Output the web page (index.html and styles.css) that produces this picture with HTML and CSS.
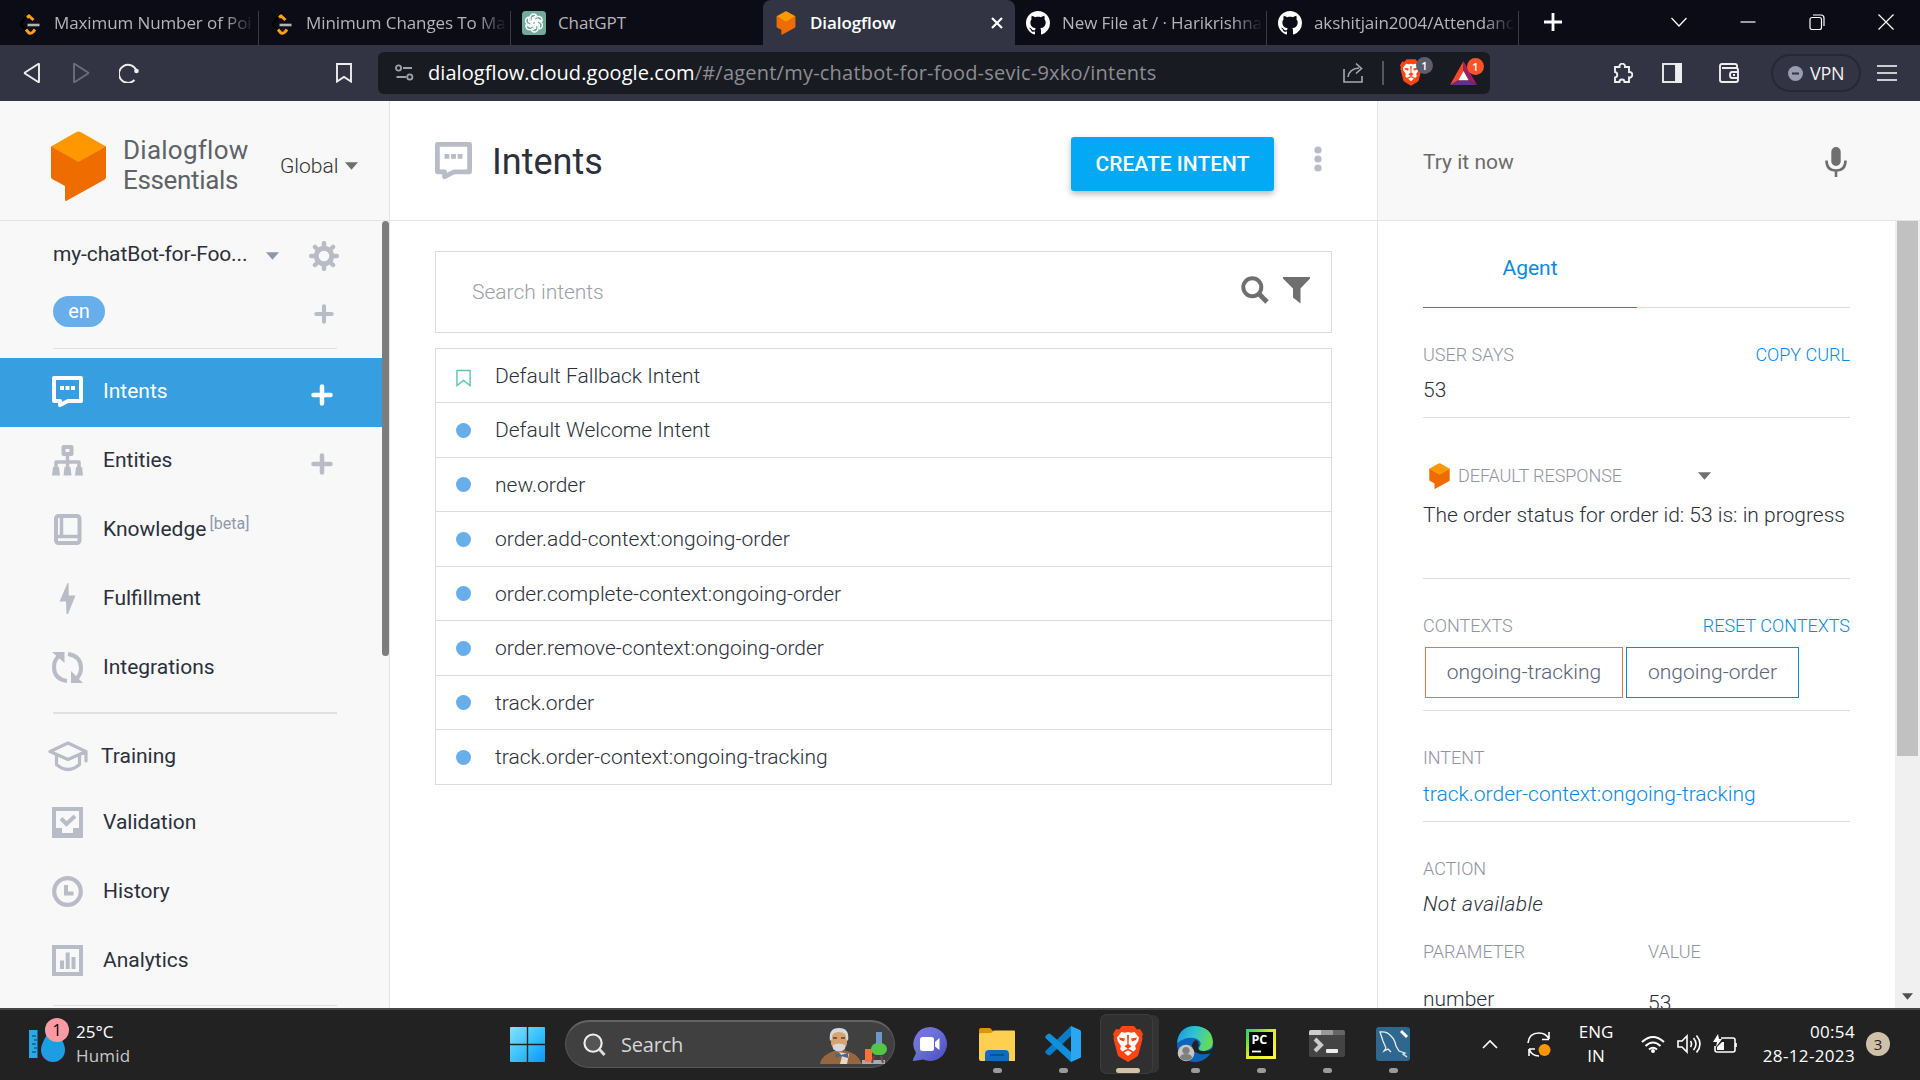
FILE: index.html
```html
<!DOCTYPE html>
<html lang="en">
<head>
<meta charset="utf-8">
<title>Dialogflow</title>
<link rel="stylesheet" href="styles.css">
</head>
<body>
<svg class="defs" aria-hidden="true">
  <symbol id="df" viewBox="0 0 55 70"><path fill="#ef6c00" d="M0 15 27.500 30 55 15V46q0 2-2 3L16 69.500Q14 71 14 68V55L2 48.500Q0 47.500 0 46Z"/><path fill="#ff9800" d="M0 15.500 25 1.200q2.500-1.500 5 0L55 15.500 27.500 31Z"/></symbol>
  <symbol id="leet" viewBox="0 0 24 24"><path d="M12 2 4 11q-1.500 2 0 4l6 6" fill="none" stroke="#000" stroke-width="2.600"/><path d="m9 6.500 2-1.500 4.500 4M8 18.500l3 3.500q2 1 4-1l2-2.500" fill="none" stroke="#ffa116" stroke-width="3" /><path d="M9.500 14h12" stroke="#b3b3b3" stroke-width="2.600"/></symbol>
  <symbol id="gh" viewBox="0 0 16 16"><path fill="#fff" d="M8 0C3.580 0 0 3.580 0 8c0 3.540 2.290 6.530 5.470 7.590.4.070.55-.17.55-.38 0-.19-.01-.82-.01-1.490-2.010.37-2.530-.49-2.690-.94-.09-.23-.48-.94-.82-1.130-.28-.15-.68-.52-.01-.53.63-.01 1.080.58 1.230.82.72 1.210 1.870.87 2.330.66.07-.52.28-.87.51-1.070-1.780-.2-3.640-.89-3.640-3.950 0-.87.31-1.590.82-2.150-.08-.2-.36-1.020.08-2.120 0 0 .67-.21 2.200.82.640-.18 1.320-.27 2-.27s1.360.09 2 .27c1.530-1.040 2.200-.82 2.200-.82.44 1.100.16 1.920.08 2.120.51.56.82 1.270.82 2.150 0 3.070-1.870 3.750-3.650 3.950.29.25.54.73.54 1.480 0 1.070-.01 1.930-.01 2.200 0 .21.15.46.55.38A8.010 8.010 0 0 0 16 8c0-4.420-3.580-8-8-8Z"/></symbol>
  <symbol id="lion" viewBox="0 0 30 36"><path fill="#ff4612" d="m9 0h12l3 3.500 3-.5 3 5-1 3 .500 2-4 15.500q-.5 1.500-2 2.500L15 36l-8.500-5q-1.500-1-2-2.500L.500 13l.500-2-1-3 3-5 3 .500Z"/><path fill="#fff" d="m8.500 6 3.500.7 3-.7 3 .7 3.500-.7 4.500 5.500-.6 3.500-3.400 5 1 3-2.500 2.500-3.500-2-2-.7-2 .7-3.500 2L7 23l1-3-3.400-5-.6-3.500Z"/><path fill="#fff" d="m15 24.500 4 2-4 3.500-4-3.500Z"/><path fill="#ff4612" d="m6 11.500 6 1-1 3-4-1.500ZM24 11.500l-6 1 1 3 4-1.500ZM14 9h2l-.4 9 2.900 2.300L15 23l-3.500-2.700L14.400 18Z"/></symbol>
  <symbol id="chat" viewBox="0 0 31 31"><path fill="none" stroke="currentColor" stroke-width="4" stroke-linejoin="round" d="M2 2H29V25H16L8 29V25H2Z"/><path fill="currentColor" d="M8 10h4v4H8zM13.500 10h4v4h-4zM19 10h4v4h-4z"/></symbol>
  <symbol id="plus" viewBox="0 0 22 22"><path stroke="currentColor" stroke-width="4.500" stroke-linecap="round" d="M11 2.500v17M2.500 11h17"/></symbol>
  <symbol id="caret" viewBox="0 0 14 8"><path fill="currentColor" d="M0 0h14L7 8Z"/></symbol>
</svg>

<header class="browser">
  <div class="tabstrip">
    <div class="tab"><svg class="fav"><use href="#leet"/></svg><span class="tab-title fade">Maximum Number of Poi</span></div>
    <div class="tab"><svg class="fav"><use href="#leet"/></svg><span class="tab-title fade">Minimum Changes To Ma</span></div>
    <div class="tab last"><svg class="fav" viewBox="0 0 24 24"><rect width="24" height="24" rx="3.500" fill="#74aa9c"/><g fill="none" stroke="#fff" stroke-width="1.300"><path id="petal" d="M12 8.500 8 10.800V6.500a3.600 3.600 0 0 1 6.500-2l-4 2.300v8"/><use href="#petal" transform="rotate(60 12 12)"/><use href="#petal" transform="rotate(120 12 12)"/><use href="#petal" transform="rotate(180 12 12)"/><use href="#petal" transform="rotate(240 12 12)"/><use href="#petal" transform="rotate(300 12 12)"/></g></svg><span class="tab-title">ChatGPT</span></div>
    <div class="tab active"><svg class="fav"><use href="#df"/></svg><span class="tab-title">Dialogflow</span><svg class="tab-x" viewBox="0 0 12 12"><path d="m1 1 10 10M11 1 1 11" stroke="#fff" stroke-width="2.200"/></svg></div>
    <div class="tab"><svg class="fav"><use href="#gh"/></svg><span class="tab-title fade">New File at / · Harikrishna</span></div>
    <div class="tab"><svg class="fav"><use href="#gh"/></svg><span class="tab-title fade">akshitjain2004/Attendanc</span></div>
    <svg class="newtab" viewBox="0 0 18 18"><path d="M9 0v18M0 9h18" stroke="#fff" stroke-width="2.800"/></svg>
    <div class="winctl">
      <svg viewBox="0 0 16 16"><path d="m.500 4 7.500 8 7.500-8"/></svg>
      <svg viewBox="0 0 16 16"><path d="M.5 8h15"/></svg>
      <svg viewBox="0 0 16 16"><rect x="1" y="3.500" width="11.500" height="12" rx="2"/><path d="M4 1h8q3 0 3 3v8"/></svg>
      <svg viewBox="0 0 16 16"><path d="m.500.500 15 15M15.500.500l-15 15"/></svg>
    </div>
  </div>
  <div class="toolbar">
    <div class="nav">
      <svg viewBox="0 0 20 20"><path d="M16 1.200v17.600q0 .7-.8.2L2 10.500q-.6-.5 0-1L15.200 1q.8-.4.800.2Z"/></svg>
      <svg class="dim" viewBox="0 0 20 20"><path d="M3 1.200v17.600q0 .7.800.2L17 10.500q.6-.5 0-1L3.800 1Q3 .600 3 1.200Z"/></svg>
      <svg viewBox="0 0 20 20"><path d="M15.500 17a9 9 0 1 1 2-9"/><circle cx="17.500" cy="8" r="2.300" fill="#eee" stroke="none"/></svg>
    </div>
    <svg class="bookmark" viewBox="0 0 16 20"><path d="M1 1h14v17.500L8 14l-7 4.500Z"/></svg>
    <div class="url">
      <svg class="site" viewBox="0 0 19 17"><g fill="none" stroke="#a0a2aa" stroke-width="1.800"><circle cx="3.500" cy="4" r="2.600"/><path d="M8 4h9M1.500 13H11"/><circle cx="14.800" cy="13" r="2.600"/></g></svg>
      <span class="host">dialogflow.cloud.google.com</span><span class="path">/#/agent/my-chatbot-for-food-sevic-9xko/intents</span>
      <svg class="share" viewBox="0 0 22 22"><path d="M1 7v13h18v-6M5 15q1-8 11-9M13 1.500 18.500 6.500 13 11.500" fill="none" stroke="#a9abb3" stroke-width="1.600"/></svg>
      <i class="vsep"></i>
      <span class="shield"><svg><use href="#lion"/></svg><b>1</b></span>
      <span class="bat"><svg viewBox="0 0 26 23"><path fill="#ff4724" d="M13 0 0 23l8-4.500 5-9Z"/><path fill="#9e1f63" d="m13 0 13 23-8-4.500-5-9Z"/><path fill="#662d91" d="M0 23h26l-8-4.500H8Z"/><path fill="#fff" d="m13 9.500 5 9H8Z"/></svg><b>1</b></span>
    </div>
    <div class="ext">
      <svg viewBox="0 0 20 20"><path d="M2 4h4.500a2.800 2.800 0 1 1 5.500 0H16v5a2.800 2.800 0 1 1 0 5.500V19h-4.500a2.400 2.400 0 0 0-5 0H2v-4.500a2.800 2.800 0 0 0 0-5.500Z"/></svg>
      <svg viewBox="0 0 20 20"><rect x="1" y="1" width="18" height="18"/><path d="M14 1h5v18h-5z" fill="#eee"/></svg>
      <svg viewBox="0 0 20 20"><path d="M18 5V3q0-2-2-2H3Q1 1 1 3v14q0 2 2 2h14q2 0 2-2V7q0-2-2-2H3M19 9h-6q-2 0-2 3t2 3h6M14 12h2"/></svg>
    </div>
    <div class="vpn"><svg viewBox="0 0 15 15"><circle cx="7.500" cy="7.500" r="7.500" fill="#9a9cb0"/><path d="M4 7.500h7" stroke="#323443" stroke-width="2"/></svg>VPN</div>
    <svg class="burger" viewBox="0 0 20 16"><path d="M0 1h20M0 8h20M0 15h20" stroke="#fff" stroke-width="1.600"/></svg>
  </div>
</header>

<div class="page">
  <aside class="side">
    <div class="brand">
      <svg class="logo"><use href="#df"/></svg>
      <div class="brand-name"><span>Dialogflow</span><span class="sub">Essentials</span></div>
      <div class="region">Global</div><svg class="caret gray"><use href="#caret"/></svg>
    </div>
    <div class="side-body">
      <nav class="menu">
        <div class="agent"><span class="agent-name">my-chatBot-for-Foo...</span><svg class="caret"><use href="#caret"/></svg>
          <svg class="gear" viewBox="0 0 30 30"><g fill="none" stroke="currentColor"><circle cx="15" cy="15" r="7.800" stroke-width="5"/><path stroke-width="4.500" stroke-linecap="round" d="M15 2.200v3M15 24.800v3M2.200 15h3M24.800 15h3M6 6l2 2M22 22l2 2M6 24l2-2M22 8l2-2"/></g></svg></div>
        <div class="lang"><span class="pill">en</span><svg class="plus sm"><use href="#plus"/></svg></div>
        <hr>
        <a class="item on"><svg class="mi"><use href="#chat"/></svg><span>Intents</span><svg class="plus"><use href="#plus"/></svg></a>
        <a class="item"><svg class="mi" viewBox="0 0 31 31"><g fill="none" stroke="currentColor" stroke-width="4" stroke-linejoin="round"><rect x="11.500" y="2" width="8" height="7"/><path stroke-width="3.500" d="M15.500 10v14M4 24v-7h23v7"/></g><path fill="currentColor" d="M1 22h6l1 8.500H0ZM12.500 22h6l1 8.500h-8ZM24 22h6l1 8.500h-8Z"/></svg><span>Entities</span><svg class="plus"><use href="#plus"/></svg></a>
        <a class="item"><svg class="mi" viewBox="0 0 31 31"><rect x="4" y="2" width="23.500" height="27" rx="2.500" fill="none" stroke="currentColor" stroke-width="4"/><path fill="none" stroke="currentColor" stroke-width="3.500" d="M9.500 2v20M4 22.500h23"/></svg><span>Knowledge <sup>[beta]</sup></span></a>
        <a class="item"><svg class="mi" viewBox="0 0 31 31"><path fill="currentColor" d="M15.500 0 7.500 18.500H14L14.500 31h1.500L23.500 12.500H16.800L16.500 0Z"/></svg><span>Fulfillment</span></a>
        <a class="item"><svg class="mi" viewBox="0 0 31 31"><g fill="none" stroke="currentColor" stroke-width="4"><path d="M15 29Q2 27 2 15 2 8 7 4M16 2q13 2 13 14 0 7-5 11"/></g><path fill="currentColor" d="M0 0h12.500v11ZM31 31H19V19Z"/></svg><span>Integrations</span></a>
        <hr class="thick">
        <a class="item first"><svg class="mi wide" viewBox="0 0 40 31"><g fill="none" stroke="currentColor" stroke-width="3.200" stroke-linejoin="round" stroke-linecap="round"><path d="M2 10.500 20 2l18 8.500L20 18.500ZM8.500 14v9.500q11.500 10 23 0V14M38 10.500V20"/></g></svg><span>Training</span></a>
        <a class="item"><svg class="mi" viewBox="0 0 31 31"><rect x="2" y="2" width="27" height="27" fill="none" stroke="currentColor" stroke-width="4"/><path fill="currentColor" d="M2 21h8v5h11v-5h8v9H2Z"/><path fill="none" stroke="currentColor" stroke-width="4" d="m9 11.500 5.500 5.500L23 9"/></svg><span>Validation</span></a>
        <a class="item"><svg class="mi" viewBox="0 0 31 31"><circle cx="15.500" cy="15.500" r="13.300" fill="none" stroke="currentColor" stroke-width="4.200"/><path fill="none" stroke="currentColor" stroke-width="4" d="M14 9v8.500h7.500"/></svg><span>History</span></a>
        <a class="item"><svg class="mi" viewBox="0 0 31 31"><rect x="2" y="2" width="27" height="27" fill="none" stroke="currentColor" stroke-width="4"/><path stroke="currentColor" stroke-width="4" d="M10 15.500V24M15.700 7.500V24M21.500 12V24"/></svg><span>Analytics</span></a>
        <hr class="end">
      </nav>
      <div class="side-scroll"><i></i></div>
    </div>
  </aside>

  <main class="main">
    <div class="main-head">
      <svg class="h-icon"><use href="#chat"/></svg><h1>Intents</h1>
      <button class="create">CREATE INTENT</button>
      <svg class="kebab" viewBox="0 0 8 26"><g fill="#b7bcc6"><circle cx="4" cy="4" r="3.600"/><circle cx="4" cy="13" r="3.600"/><circle cx="4" cy="22" r="3.600"/></g></svg>
    </div>
    <div class="main-body">
      <div class="search"><span>Search intents</span>
        <svg viewBox="0 0 28 28"><circle cx="11.300" cy="11.300" r="9" fill="none" stroke="#6f6f6f" stroke-width="4"/><path d="m18 18 8 8" stroke="#6f6f6f" stroke-width="5"/></svg>
        <svg viewBox="0 0 28 28"><path fill="#6f6f6f" d="M0 1h27v1.500L17.500 12.500V27.500L10 21.500v-9L0 2.500Z"/></svg>
      </div>
      <ul class="list">
        <li><svg class="mark" viewBox="0 0 16 18"><path d="M1 1h14v16L8 11.500 1 17Z" fill="none" stroke="#58c9ad" stroke-width="1.500"/></svg>Default Fallback Intent</li>
        <li><i></i>Default Welcome Intent</li>
        <li><i></i>new.order</li>
        <li><i></i>order.add-context:ongoing-order</li>
        <li><i></i>order.complete-context:ongoing-order</li>
        <li><i></i>order.remove-context:ongoing-order</li>
        <li><i></i>track.order</li>
        <li><i></i>track.order-context:ongoing-tracking</li>
      </ul>
    </div>
  </main>

  <section class="try">
    <div class="try-head"><span>Try it now</span><svg class="mic" viewBox="0 0 22 30"><rect x="6.300" y="0" width="9.400" height="19" rx="4.700" fill="#6f6f6f"/><path d="M1.500 13.500q0 10 9.500 10t9.500-10M11 23.500V30" fill="none" stroke="#6f6f6f" stroke-width="2.600"/></svg></div>
    <div class="try-wrap">
      <div class="try-body">
        <div class="tabs"><span>Agent</span></div>
        <div class="sec says"><div class="row"><label>USER SAYS</label><a>COPY CURL</a></div><p>53</p></div>
        <div class="sec resp"><div class="resp-head"><svg class="ico"><use href="#df"/></svg><label>DEFAULT RESPONSE</label><svg class="caret gray"><use href="#caret"/></svg></div><p class="msg">The order status for order id: 53 is: in progress</p></div>
        <div class="sec ctx"><div class="row"><label>CONTEXTS</label><a>RESET CONTEXTS</a></div><div class="chips"><span class="chip o">ongoing-tracking</span><span class="chip">ongoing-order</span></div></div>
        <div class="sec int"><label>INTENT</label><p class="link">track.order-context:ongoing-tracking</p></div>
        <div class="act"><label>ACTION</label><p class="na">Not available</p></div>
        <div class="params"><label>PARAMETER</label><label>VALUE</label><p>number</p><p class="val">53</p></div>
      </div>
      <div class="vscroll"><i></i><svg viewBox="0 0 12 7"><path fill="#505050" d="M0 0h12L6 7Z"/></svg></div>
    </div>
  </section>
</div>

<footer class="taskbar">
  <div class="weather">
    <svg viewBox="0 0 40 46"><rect y="12" width="8.500" height="28" fill="#29a9e8"/><path d="M3 18h4M5 22h3M3 26h4M5 30h3M3 34h4" stroke="#125e93" stroke-width="1.600"/><path d="M24 8q12 16 12 24a12 12 0 0 1-24 0q0-8 12-24Z" fill="#1e9de4"/><circle cx="28" cy="12" r="12" fill="#ff99a4"/><text x="28" y="17.500" text-anchor="middle" font-size="16">1</text></svg>
    <div><span>25°C</span><span class="mute">Humid</span></div>
  </div>
  <div class="dock">
    <svg class="start" viewBox="0 0 35 35"><defs><linearGradient id="w" gradientUnits="userSpaceOnUse" x2="35" y2="35"><stop stop-color="#86e0ff"/><stop offset=".5" stop-color="#3cc3fd"/><stop offset="1" stop-color="#0a95fb"/></linearGradient></defs><path fill="url(#w)" d="M0 1q0-1 1-1h15.800v16.800H0ZM18.200 0H34q1 0 1 1v15.800H18.200ZM0 18.200h16.800V35H1q-1 0-1-1ZM18.200 18.200H35V34q0 1-1 1H18.200Z"/></svg>
    <div class="pillbox"><svg class="mag" viewBox="0 0 24 24"><circle cx="10.500" cy="10.500" r="9" fill="#555" stroke="#eee" stroke-width="2.200"/><path d="m17 17 5.500 6" stroke="#ddd" stroke-width="3"/></svg><span>Search</span>
      <svg class="doodle" viewBox="0 0 67 36"><path fill="#96663f" d="M0 36q1-9 14-13l9-1q14 2 19 14Z"/><path fill="#d9a36f" d="M11 7q0-6 8-6t8 6v9q-2 7-8 7t-8-7Z"/><path fill="#d5d8e0" d="M10 13Q8 0 19 0t9 13l-2-2q1-7-7-7t-7 7ZM13 17q6-3 12 0v4q-6 5-12 0Z"/><path d="M13 10h4M21 10h4" stroke="#5b4030" stroke-width="1.500"/><path fill="#e9d8c4" d="m19 24 3 4-2 8h7l2-10Z"/><path fill="#41689e" d="m15 25 6 2 7-2v5l-7-2-5 2Z"/><path fill="#aaa" d="M42 32h23v4H42Z"/><path fill="#f4733b" d="M45 21h7v13h-7Z"/><path fill="#6d96c9" d="M56 4h6v13h-6Z"/><path fill="#55c447" d="M56 15h6q5 2 5 6t-5 6h-6q-5-2-5-6t5-6Z"/><path d="m54 28-2 7m9-7 2 7" stroke="#6b4766" stroke-width="2"/></svg></div>
    <svg class="meet" viewBox="0 0 34 34"><defs><linearGradient id="m" x2="1" y2="1"><stop stop-color="#8a6fd0"/><stop offset=".4" stop-color="#6a73d9"/><stop offset="1" stop-color="#4b4cc0"/></linearGradient></defs><path fill="url(#m)" d="M17 0a17 17 0 1 1-7 32.500L1 34q-1.500 0-1-1.500L3 26A17 17 0 0 1 17 0Z"/><rect x="7" y="10" width="14" height="14" rx="2.500" fill="#fff"/><path fill="#fff" d="m22 15 4.500-4v12L22 19.500Z"/></svg>
    <div class="apps">
      <div class="app"><svg viewBox="0 0 36 36"><path fill="#d89800" d="M0 4q0-2 2-2h9l4 4v4H0Z"/><path fill="#ffd04f" d="M0 9q0-2 2-2h10l3-2.500h20q1 0 1 1V35H2q-2 0-2-2Z"/><path fill="#0f6cbd" d="M6 35V28q0-4 4-4h16q4 0 4 4v7Z"/><path d="M11 29h14" stroke="#0a4a8a" stroke-width="1.500"/></svg></div>
      <div class="app"><svg viewBox="0 0 36 36"><path fill="#0a7dc9" d="M26 0 1 24.500q-1.500 1.500 0 3L3 29q1 .8 2.500 0L26 10Z"/><path fill="#0f8fdc" d="M26 36 1 12.500q-1.500-1.500 0-3L3 8q1-.8 2.500 0L26 26Z"/><path fill="#2ba6f2" d="m26 0 9 4q1 .5 1 1.500v25q0 1-1 1.500l-9 4Z"/></svg></div>
      <div class="app cur"><svg viewBox="0 0 30 36"><use href="#lion"/></svg></div>
      <div class="app"><svg viewBox="0 0 36 36"><defs><linearGradient id="e1" x2="1" y2=".3"><stop stop-color="#1b8fe0"/><stop offset=".5" stop-color="#2fc0d8"/><stop offset="1" stop-color="#62dc5a"/></linearGradient></defs><circle cx="18" cy="18" r="18" fill="#1064b8"/><path fill="url(#e1)" d="M0 17Q2 0 18 0q17 1 18 16 0 8-9 9-6 0-5-3 4-6-2-9-9-4-20 4Z"/><path fill="#222" d="M19 14q4 2 2 8 1 4 8 3 5-1 8-4v5q-6 3-14 2-9-2-8-9 1-4 4-5Z"/><circle cx="9" cy="27" r="8.300" fill="#c8c6c4"/><circle cx="9" cy="24.500" r="3.600" fill="#807e7c"/><path fill="#807e7c" d="M3 32q0-4 6-4t6 4q-6 5-12 0Z"/></svg></div>
      <div class="app"><svg viewBox="0 0 36 36"><defs><linearGradient id="p" x2="1" y2="1"><stop stop-color="#21d789"/><stop offset=".15" stop-color="#3fe04a"/><stop offset=".5" stop-color="#e8ec1e"/><stop offset="1" stop-color="#fcf84a"/></linearGradient></defs><rect x="3" y="3" width="30" height="30" fill="url(#p)"/><rect x="6" y="6" width="24" height="24" fill="#000"/><text x="8.500" y="18.300" fill="#fff" font-size="12.500" font-weight="700">PC</text><path d="M9 25.500h9" stroke="#fff" stroke-width="1.800"/></svg></div>
      <div class="app"><svg viewBox="0 0 36 36"><rect y="4" width="36" height="27" rx="2" fill="#444"/><path fill="#ccc" d="M0 9V6q0-2 2-2h10v5Z"/><path fill="#999" d="M12 4h12v5H12Z"/><path fill="#666" d="M24 4h10q2 0 2 2v3H24Z"/><path d="m6 13 6 6-6 6" fill="none" stroke="#ccc" stroke-width="4"/><rect x="17" y="23" width="12" height="4" rx="1" fill="#eee"/></svg></div>
      <div class="app"><svg viewBox="0 0 36 36"><rect x="1" y="1" width="34" height="34" rx="3" fill="#2e688f"/><path d="M11 22 8 15Q6 9 5 6q7-1 11 4 4 4 5 10l3 5 6 2-2 1 4 3M11 22l-2 3 4-2 3 3" fill="none" stroke="#e6eef4" stroke-width="1.300"/><path d="m26 5 6 6" stroke="#fff" stroke-width="3"/></svg></div>
    </div>
  </div>
  <div class="tray">
    <svg class="up" viewBox="0 0 16 10"><path d="m1 9 7-7 7 7"/></svg>
    <svg class="sync" viewBox="0 0 26 26"><path d="M2 12Q3 2 13 2q7 0 10 6V1M23 8.500h-7M13 25Q6 25 3 18v7M3 18h6"/><circle cx="18.500" cy="19" r="6" fill="#ff9500" stroke="none"/></svg>
    <div class="kb"><span>ENG</span><span>IN</span></div>
    <svg class="wifi" viewBox="0 0 24 18"><path d="M1 7q11-10 22 0M4.500 11q7.500-7 15 0M8 14.500q4-3.500 8 0" stroke-width="2"/><circle cx="12" cy="16" r="2" fill="#fff" stroke="none"/></svg>
    <svg class="snd" viewBox="0 0 24 20"><path d="M1 7h4l5-5v16l-5-5H1ZM13.500 7q2 3 0 6M16.500 4q5 6 0 12M19.500 1.500q7 8.500 0 17"/></svg>
    <svg class="batt" viewBox="0 0 24 20"><path d="M8 4h12q2 0 2 2v10q0 2-2 2H4q-2 0-2-2v-4M23 9v4"/><path fill="#fff" stroke="none" d="M5 0 0 8h4l-1 5 6-8H6ZM4 16V13l5-5h2v8Z"/></svg>
    <div class="clock"><span>00:54</span><span>28-12-2023</span></div>
    <b class="count">3</b>
  </div>
</footer>
</body>
</html>
```
FILE: styles.css
```css
* { box-sizing: border-box; }
body { margin: 0; width: 1920px; height: 1080px; overflow: hidden; display: flex; flex-direction: column; background: #fff; font: 400 21px/24px Roboto, "Liberation Sans", sans-serif; color: #2b303b; }
svg { display: block; flex: none; }
h1, p, ul, hr { margin: 0; padding: 0; }
.defs { width: 0; height: 0; position: absolute; }

.browser, .taskbar { font-family: "Open Sans", "Noto Sans", sans-serif; }
.tabstrip { height: 45px; background: #0c0c16; display: flex; padding-left: 7px; align-items: stretch; }
.tab { width: 252px; display: flex; align-items: center; padding-left: 11px; color: #b4b4b9; font-size: 17px; background: linear-gradient(#3c3c40, #3c3c40) right bottom / 1px 34px no-repeat; }
.tab.last { background: none; }
.tab.active { background: #323443; border-radius: 8px 8px 0 0; color: #fff; font-weight: 600; }
.fav { width: 24px; height: 24px; margin-right: 12px; }
.tab-title { width: 203px; flex: none; overflow: hidden; white-space: nowrap; letter-spacing: -0.1px; }
.tab.active .tab-title { width: 181px; letter-spacing: -0.1px; }
.fade { -webkit-mask-image: linear-gradient(90deg, #000 170px, transparent 201px); }
.tab-x { width: 12px; height: 12px; }
.newtab { width: 18px; height: 18px; margin: 13px 0 0 25px; }
.winctl { margin-left: auto; display: flex; align-items: center; gap: 53px; padding: 0 26px 2px 0; }
.winctl svg { width: 16px; height: 16px; fill: none; stroke: #fff; stroke-width: 1.200; }

.toolbar { height: 56px; background: #323443; display: flex; align-items: center; padding: 0 23px 0 23px; }
.toolbar svg { fill: none; stroke: #eee; stroke-width: 1.900; }
.toolbar svg svg, .toolbar use, .shield svg, .bat svg, .vpn svg { stroke: none; }
.nav { display: flex; gap: 28px; }
.nav svg { width: 20px; height: 20px; }
.nav .dim { stroke: #6c6e7b; }
.bookmark { width: 16px; height: 20px; margin-left: 197px; }
.url { width: 1112px; height: 42px; margin: -1px 0 0 26px; padding: 0 13px 0 17px; border-radius: 6px; background: #191b22; display: flex; align-items: center; font-size: 20px; white-space: nowrap; }
.site { width: 19px; height: 17px; margin-right: 14px; }
.host { color: #fff; letter-spacing: 0.07px; }
.path { color: #8c8d92; letter-spacing: 0.22px; }
.share { width: 22px; height: 22px; margin-left: auto; }
.vsep { width: 2px; height: 24px; background: #55575f; margin: 0 16px 0 17px; }
.shield, .bat { position: relative; display: block; }
.shield svg { width: 22px; height: 27px; margin-right: 28px; }
.bat svg { width: 27px; height: 24px; }
.shield b, .bat b { position: absolute; top: -2px; left: 16px; width: 17px; height: 17px; border-radius: 9px; background: #5c5e6e; color: #fff; font: 600 11px/17px "Open Sans", sans-serif; text-align: center; }
.bat b { left: 17px; top: -3px; background: #fb542b; }
.ext { display: flex; gap: 37px; margin-left: 123px; }
.ext svg { width: 20px; height: 20px; }
.ext svg + svg { margin-left: -8px; }
.ext svg + svg + svg { margin-left: 0; }
.vpn { width: 90px; height: 38px; margin-left: 32px; border: 2px solid #262834; border-radius: 19px; display: flex; align-items: center; padding-left: 15px; color: #f0f0f0; font-size: 18px; letter-spacing: -0.3px; }
.vpn svg { width: 15px; height: 15px; margin-right: 7px; }
.burger { width: 20px; height: 16px; margin-left: auto; }

.page { height: 907px; display: flex; overflow: hidden; }
.side { width: 390px; background: #f8f8f8; border-right: 1px solid #e4e4e4; display: flex; flex-direction: column; }
.brand { height: 120px; flex: none; border-bottom: 1px solid #e4e4e4; display: flex; align-items: center; padding: 10px 0 0 51px; }
.logo { width: 55px; height: 70px; }
.brand-name { width: 174px; padding: 0 0 0 17px; margin-top: -2px; color: #5f6368; font-size: 26px; line-height: 30px; display: flex; flex-direction: column; letter-spacing: 0.25px; }
.brand-name .sub { letter-spacing: -0.35px; }
.region { width: 65px; font-weight: 300; color: #333; font-size: 21px; }
.caret { width: 13px; height: 8px; color: #8f98aa; }
.caret.gray { color: #6f6f6f; }
.side-body { display: flex; flex: 1; min-height: 0; overflow: hidden; }
.menu { width: 382px; }
.side-scroll { width: 7px; }
.side-scroll i { display: block; width: 7px; height: 435px; border-radius: 4px; background: #7d7d7d; }
.agent { height: 68px; padding: 1px 0 0 53px; display: flex; align-items: center; }
.agent-name { width: 213px; margin-top: -4px; letter-spacing: -0.12px; }
.gear { width: 30px; height: 30px; margin-left: 30px; color: #b7bcc6; }
.lang { height: 59px; padding: 3px 0 18px 53px; display: flex; align-items: center; }
.pill { width: 52px; height: 31px; border-radius: 16px; background: #67aeea; color: #fff; font-size: 20px; line-height: 31px; text-align: center; }
.plus { width: 22px; height: 22px; margin: 7px 49px 0 auto; color: #b7bcc6; }
.plus.sm { width: 20px; height: 20px; margin: 6px 48px 0 auto; }
.menu hr { border: 0; height: 1px; margin: 0 45px 9px 53px; background: #e0e0e0; }
.menu hr.thick { height: 2px; margin: 9px 45px 10px 53px; }
.menu hr.end { margin-top: 9px; }
.item { height: 69px; display: flex; align-items: center; padding: 0 0 3px 52px; }
.item.first { height: 65px; padding-bottom: 1px; }
.item.first span { margin-left: -1px; }
.item.on { background: #379fe0; color: #fff; }
.mi { width: 31px; height: 31px; margin-right: 20px; color: #b7bcc6; }
.mi.wide { width: 40px; margin: 0 14px 0 -4px; }
.on .mi, .on .plus { color: #fff; }
.item sup { font-size: 16px; line-height: 0; color: #8f98aa; vertical-align: 7px; margin-left: -2px; }

.main { width: 987px; }
.main-head { height: 120px; border-bottom: 1px solid #e4e4e4; padding: 0 55px 0 45px; display: flex; align-items: center; }
.h-icon { width: 37px; height: 37px; color: #b7bcc6; }
h1 { margin: 2px 0 0 20px; font-size: 36px; font-weight: 400; line-height: 40px; }
.create { width: 203px; height: 54px; margin: 7px 0 0 auto; border: 0; border-radius: 3px; background: #03a9f4; color: #fff; font: 500 21px Roboto, sans-serif; box-shadow: 0 3px 6px rgba(0,0,0,.28); padding: 0; }
.kebab { width: 8px; height: 26px; margin: -4px 0 0 40px; }
.main-body { padding: 30px 45px 0; }
.search { height: 82px; border: 1px solid #dcdcdc; display: flex; align-items: center; padding: 0 20px 3px 36px; gap: 14px; font-weight: 300; color: #9a9fa8; }
.search span { flex: 1; padding-top: 2px; }
.search svg { width: 28px; height: 28px; margin-top: -1px; }
.list { list-style: none; margin-top: 15px; border: 1px solid #dcdcdc; border-top: 0; font-weight: 300; }
.list li { height: 54px; border-top: 1px solid #dcdcdc; display: flex; align-items: center; padding-left: 20px; }
.list li:nth-child(even) { height: 55px; }
.list i { width: 15px; height: 15px; border-radius: 50%; background: #67aeea; margin-right: 24px; }
.mark { width: 15px; height: 18px; margin: 5px 24px 0 0; }

.try { width: 543px; border-left: 1px solid #e4e4e4; display: flex; flex-direction: column; }
.try-head { height: 120px; flex: none; background: #f8f8f8; border-bottom: 1px solid #e4e4e4; display: flex; align-items: center; justify-content: space-between; padding: 2px 73px 0 45px; color: #6b6b6b; }
.mic { width: 22px; height: 30px; }
.try-wrap { flex: 1; min-height: 0; display: flex; }
.try-body { width: 517px; padding: 0 45px; overflow: hidden; font-weight: 300; }
.vscroll { width: 25px; background: #f0f0f0; display: flex; flex-direction: column; align-items: center; justify-content: space-between; padding-bottom: 8px; }
.vscroll i { width: 21px; height: 535px; background: #c1c1c1; }
.vscroll svg { width: 11px; height: 7px; }
.tabs { height: 87px; border-bottom: 1px solid #dcdcdc; display: flex; }
.tabs span { width: 214px; height: 87px; border-bottom: 1px solid #0b8ae0; color: #0b8ae0; font-weight: 400; text-align: center; line-height: 94px; }
label { display: block; font-size: 18px; line-height: 24px; color: #8f94a3; }
.sec { border-bottom: 1px solid #dcdcdc; }
.row { display: flex; justify-content: space-between; }
.row a { font-size: 18px; color: #0b8ae0; }
.says { height: 110px; padding-top: 35px; }
.says p { margin-top: 11px; }
.resp { height: 161px; padding-top: 45px; }
.resp-head { display: flex; align-items: center; height: 26px; }
.ico { width: 21px; height: 26px; margin: 0 8px 0 6px; }
.resp-head label { width: 240px; letter-spacing: -0.05px; }
.msg { margin-top: 14px; white-space: nowrap; }
.ctx { height: 132px; padding-top: 35px; }
.chips { display: flex; gap: 3px; margin: 9px 0 0 2px; }
.chip { width: 173px; height: 51px; border: 1px solid #0b8ae0; color: #5a6478; text-align: center; line-height: 49px; }
.chip.o { width: 198px; border-color: #f0733c; }
.int { height: 111px; padding-top: 35px; }
.link { color: #0b8ae0; margin-top: 12px; }
.act { height: 106px; padding-top: 35px; }
.na { margin-top: 11px; font-style: italic; letter-spacing: 0.38px; }
.params { display: grid; grid-template-columns: 225px 1fr; row-gap: 23px; padding-top: 12px; }
.val { padding-top: 4px; }

.taskbar { height: 72px; background: #222; border-top: 2px solid #464646; padding-bottom: 2px; position: relative; display: flex; align-items: center; color: #fff; font-size: 17px; line-height: 24px; }
.weather { display: flex; padding: 0 0 0 29px; width: 510px; }
.weather svg { width: 40px; height: 46px; margin: -2px 7px 0 0; }
.weather span, .kb span, .clock span { display: block; }
.mute { color: #c8c8c8; letter-spacing: 0.2px; }
.dock { display: flex; align-items: center; }
.start { width: 35px; height: 35px; }
.pillbox { width: 330px; height: 48px; margin-left: 20px; border-radius: 24px; background: #404040; border: 1px solid #555; border-top: 2px solid #636363; display: flex; align-items: center; padding: 0 7px 0 17px; font-size: 20px; letter-spacing: -0.2px; color: #d6d6d6; }
.mag { width: 23px; height: 23px; margin-right: 15px; }
.doodle { width: 67px; height: 36px; margin: 3px 0 0 auto; }
.meet { width: 34px; height: 34px; margin-left: 18px; }
.apps { display: flex; margin-left: 17px; }
.app { width: 66px; height: 60px; padding-top: 12px; display: flex; flex-direction: column; align-items: center; gap: 6px; }
.app svg { width: 36px; height: 36px; }
.app::after { content: ""; width: 9px; height: 5px; border-radius: 3px; background: #9b9b9b; }
.app.cur { padding-left: 3px; background: #303030; border-radius: 7px; width: 53px; margin: 0 9px 0 4px; box-shadow: inset 0 0 0 1px #3d3d3d, 7px 0 0 -1px #333; }
.app.cur::after { width: 24px; background: #d3c2a8; }
.tray { display: flex; align-items: center; margin-left: auto; padding-right: 30px; }
.tray svg { fill: none; stroke: #fff; stroke-width: 1.600; }
.up { width: 16px; height: 10px; }
.sync { width: 26px; height: 26px; margin: 0 25px 0 28px; }
.kb { width: 38px; text-align: center; margin-right: 26px; }
.wifi { width: 24px; height: 18px; }
.snd { width: 24px; height: 20px; margin: 0 12px; }
.batt { width: 24px; height: 20px; }
.clock { width: 118px; text-align: right; white-space: nowrap; letter-spacing: 0.35px; }
.count { width: 24px; height: 24px; margin-left: 11px; border-radius: 12px; background: #d0c0a8; color: #222; font: 400 15px/24px "Open Sans", sans-serif; text-align: center; }
```
